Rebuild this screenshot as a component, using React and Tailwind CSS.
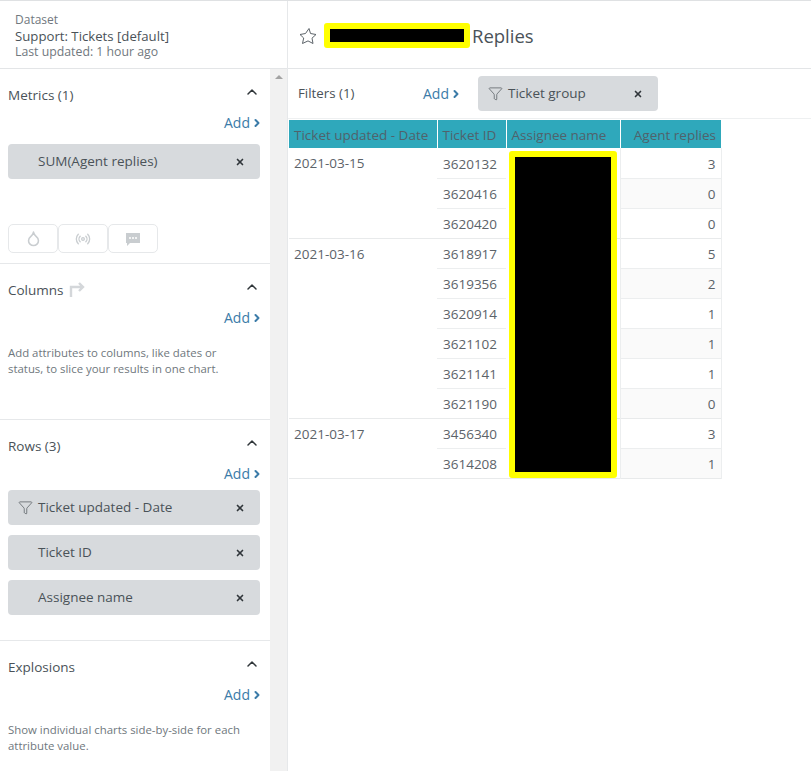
import { ChevronUp, ChevronRight, X, Droplet, Radio, Filter } from 'lucide-react';

const groups = [
  { date: '2021-03-15', rows: [['3620132', 3], ['3620416', 0], ['3620420', 0]] },
  {
    date: '2021-03-16',
    rows: [['3618917', 5], ['3619356', 2], ['3620914', 1], ['3621102', 1], ['3621141', 1], ['3621190', 0]],
  },
  { date: '2021-03-17', rows: [['3456340', 3], ['3614208', 1]] },
];

function ChatIcon() {
  return (
    <svg width="16" height="16" viewBox="0 0 16 16">
      <path d="M1 2h14v10H5l-3 3v-3H1z" fill="#c9cdd0" />
      <circle cx="5" cy="7" r="1" fill="#fff" />
      <circle cx="8" cy="7" r="1" fill="#fff" />
      <circle cx="11" cy="7" r="1" fill="#fff" />
    </svg>
  );
}

function AddLink() {
  return (
    <div className="flex justify-end h-[20px] items-center">
      <span className="text-[14px] leading-[20px] text-[#3b7ba8]">Add</span>
      <ChevronRight className="w-[12px] h-[12px] ml-[1px] -mr-[3px] text-[#3b7ba8]" strokeWidth={4} />
    </div>
  );
}

function SectionHead({ children }) {
  return (
    <div className="flex items-start justify-between h-[24px]">
      <div className="flex items-center text-[13.5px] leading-[24px] text-[#4a5258]">{children}</div>
      <ChevronUp className="w-[16px] h-[16px] mt-[1px] text-[#30363a]" strokeWidth={2.2} />
    </div>
  );
}

function Pill({ label, filter, className = '' }) {
  return (
    <div className={`flex items-center h-[35px] bg-[#d7dadd] rounded-[4px] text-[13.5px] text-[#4a5258] ${className}`}>
      <span className="w-[30px] flex justify-end pr-[5px] shrink-0">
        {filter && <Filter className="w-[15px] h-[15px] text-[#555c62]" strokeWidth={1.2} />}
      </span>
      <span className="flex-1">{label}</span>
      <X className="w-[10px] h-[10px] mr-[15px] text-[#30363a]" strokeWidth={4} />
    </div>
  );
}

function Hint({ children, className = 'w-[225px]' }) {
  return <p className={`text-[11.4px] leading-[16px] text-[#6f777d] ${className}`}>{children}</p>;
}

function Sidebar() {
  const btnClass = 'w-[50px] h-[29px] border border-[#e6e8ea] rounded-[5px] flex items-center justify-center';

  return (
    <aside className="w-[288px] shrink-0 border-r border-[#e6e8ea] flex flex-col">
      <div className="h-[68px] shrink-0 border-b border-[#e3e5e7] pl-[15px] pt-[11px] leading-[16px]">
        <div className="text-[#71787e] text-[12px]">Dataset</div>
        <div className="text-[#4a5258] text-[13.2px]">Support: Tickets [default]</div>
        <div className="text-[#71787e] text-[12.3px]">Last updated: 1 hour ago</div>
      </div>
      <div className="flex flex-1 min-h-0">
        <div className="w-[270px] shrink-0">
          <section className="h-[195px] border-b border-[#e6e8ea] pl-[8px] pr-[10px] pt-[14px]">
            <SectionHead>Metrics (1)</SectionHead>
            <div className="mt-[6px]"><AddLink /></div>
            <Pill className="mt-[11px]" label="SUM(Agent replies)" />
            <div className="flex mt-[45px]">
              <div className={btnClass}><Droplet className="w-[17px] h-[17px] text-[#c9cdd0]" strokeWidth={2.2} /></div>
              <div className={btnClass}><Radio className="w-[16px] h-[16px] text-[#c9cdd0]" strokeWidth={2} /></div>
              <div className={btnClass}><ChatIcon /></div>
            </div>
          </section>

          <section className="h-[156px] border-b border-[#e6e8ea] pl-[8px] pr-[10px] pt-[14px]">
            <SectionHead>
              Columns
              <svg className="ml-[5px]" width="16" height="16" viewBox="0 0 16 16" fill="none" stroke="#d4d7da" strokeWidth="2.4">
                <path d="M2 15V5h11M10 1l4 4-4 4" />
              </svg>
            </SectionHead>
            <div className="mt-[6px]"><AddLink /></div>
            <div className="mt-[17px]">
              <Hint>Add attributes to columns, like dates or status, to slice your results in one chart.</Hint>
            </div>
          </section>

          <section className="h-[221px] border-b border-[#e6e8ea] pl-[8px] pr-[10px] pt-[14px]">
            <SectionHead>Rows (3)</SectionHead>
            <div className="mt-[6px]"><AddLink /></div>
            <Pill className="mt-[6px]" filter label="Ticket updated - Date" />
            <Pill className="mt-[10px]" label="Ticket ID" />
            <Pill className="mt-[10px]" label="Assignee name" />
          </section>

          <section className="pl-[8px] pr-[10px] pt-[14px]">
            <SectionHead>Explosions</SectionHead>
            <div className="mt-[6px]"><AddLink /></div>
            <div className="mt-[17px]">
              <Hint className="w-[245px]">Show individual charts side-by-side for each attribute value.</Hint>
            </div>
          </section>
        </div>
        <div className="w-[17px] bg-[#f1f1f1] flex justify-center pt-[6px]">
          <div className="w-0 h-0 border-x-[4px] border-x-transparent border-b-[4px] border-b-[#a3a3a3]" />
        </div>
      </div>
    </aside>
  );
}

function DataTable() {
  return (
    <div className="relative w-[432px] ml-[1px] mt-[1px]">
      <table className="border-collapse table-fixed w-[432px] text-[13.5px] text-[#5c6369]">
        <colgroup>
          <col className="w-[148px]" />
          <col className="w-[69px]" />
          <col className="w-[114px]" />
          <col className="w-[101px]" />
        </colgroup>
        <thead>
          <tr className="h-[28px] bg-[#2fa8bb] text-[#50626b]">
            <th className="font-normal text-left px-[5px] pt-[2px] border-r border-white whitespace-nowrap">Ticket updated - Date</th>
            <th className="font-normal text-left px-[5px] pt-[2px] border-r border-white whitespace-nowrap">Ticket ID</th>
            <th className="font-normal text-left px-[5px] pt-[2px] border-r border-white whitespace-nowrap">Assignee name</th>
            <th className="font-normal text-right px-[5px] pt-[2px] whitespace-nowrap">Agent replies</th>
          </tr>
        </thead>
        <tbody>
          {groups.map((g) =>
            g.rows.map(([id, n], i) => (
              <tr key={id} className={`h-[30px] ${i === g.rows.length - 1 ? 'border-b border-[#e8eaeb]' : ''}`}>
                {i === 0 && (
                  <td rowSpan={g.rows.length} className="align-top px-[5px] pt-[5px] leading-[20px]">
                    {g.date}
                  </td>
                )}
                <td className={`pl-[6px] pr-[4px] pt-[3px] ${i < g.rows.length - 1 ? 'border-b border-[#eceeef]' : ''}`}>{id}</td>
                <td />
                <td className={`px-[5px] pt-[3px] text-right border-l border-r border-[#eceeef] ${i < g.rows.length - 1 ? 'border-b border-[#eceeef]' : ''} ${i % 2 === 1 ? 'bg-[#fafafa]' : ''}`}>{n}</td>
              </tr>
            ))
          )}
        </tbody>
      </table>
      <div className="absolute left-[220px] top-[31px] w-[108px] h-[327px] bg-black border-[6px] border-[#ffff00] rounded-[3px]" />
    </div>
  );
}

export default function App() {
  return (
    <div className='w-[811px] h-[771px] overflow-hidden bg-white border-t border-[#dfe1e3] flex font-["Open_Sans",sans-serif]'>
      <Sidebar />
      <main className="flex-1 min-w-0">
        <div className="h-[68px] border-b border-[#e3e5e7] flex items-center pl-[11px] pt-[2px]">
          <svg width="18" height="18" viewBox="0 0 18 18" fill="none" stroke="#5c6369" strokeWidth="1" strokeLinejoin="round">
            <path d="M6.5 6.5 10 1.5l1.5 5 5.5 1-4 3.7 1 5.3-5-2.6-5.5 2.6 1.2-5.5L1 7.5z" />
          </svg>
          <div className="w-[146px] h-[25px] ml-[7px] bg-black border-[6px] border-[#ffff00] rounded-[3px]" />
          <span className="ml-[2px] text-[18.5px] text-[#4a5258]">Replies</span>
        </div>
        <div className="h-[50px] border-b border-[#eef0f1] flex items-center pl-[10px]">
          <span className="w-[125px] text-[13.3px] text-[#4a5258]">Filters (1)</span>
          <span className="text-[14px] text-[#3b7ba8]">Add</span>
          <ChevronRight className="w-[12px] h-[12px] ml-[1px] text-[#3b7ba8]" strokeWidth={4} />
          <div className="ml-[16px] w-[180px]">
            <Pill filter label="Ticket group" />
          </div>
        </div>
        <DataTable />
      </main>
    </div>
  );
}
